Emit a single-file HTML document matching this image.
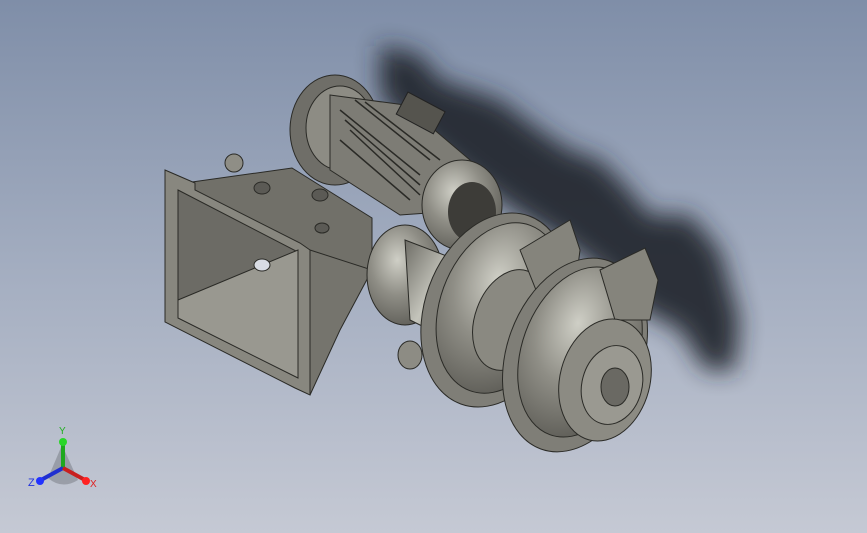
<!DOCTYPE html>
<html><head><meta charset="utf-8"><style>
html,body{margin:0;padding:0;width:867px;height:533px;overflow:hidden}
svg{display:block}
</style></head><body>
<svg width="867" height="533" viewBox="0 0 867 533" xmlns="http://www.w3.org/2000/svg">
<defs>
<linearGradient id="bg" x1="0" y1="0" x2="0" y2="1">
<stop offset="0" stop-color="#7f8ea8"/><stop offset="0.5" stop-color="#a3adc0"/><stop offset="1" stop-color="#c5c9d4"/>
</linearGradient>
<filter id="bl" x="-30%" y="-30%" width="160%" height="160%"><feGaussianBlur stdDeviation="12"/></filter>
<radialGradient id="met" cx="0.4" cy="0.35" r="0.7">
<stop offset="0" stop-color="#cfcfc6"/><stop offset="0.5" stop-color="#8f8e86"/><stop offset="1" stop-color="#5e5d57"/>
</radialGradient>
<linearGradient id="cyl" x1="0" y1="0" x2="1" y2="1">
<stop offset="0" stop-color="#6e6d66"/><stop offset="0.45" stop-color="#c4c4bb"/><stop offset="1" stop-color="#6a6963"/>
</linearGradient>
</defs>
<rect width="867" height="533" fill="url(#bg)"/>
<g filter="url(#bl)" fill="#22262e" opacity="0.92">
<path d="M380 45 L420 55 L440 80 L500 100 L540 130 L570 150 L600 160 L625 185 L650 215 L690 215 L720 250 L740 320 L735 370 L705 370 L680 330 L640 310 L600 270 L560 240 L520 215 L470 180 L420 140 L380 95 Z"/>
</g>
<ellipse cx="335" cy="130" rx="45" ry="55" fill="#6f6e68" stroke="#2a2a26"/>
<ellipse cx="340" cy="128" rx="34" ry="42" fill="#8d8c84" stroke="#2a2a26"/>
<path d="M330 95 L405 105 L470 160 L470 210 L400 215 L330 170 Z" fill="#7d7c75" stroke="#2a2a26"/>
<g stroke="#2a2a26" stroke-width="1.5">
<line x1="340" y1="110" x2="420" y2="175"/><line x1="345" y1="120" x2="420" y2="185"/>
<line x1="350" y1="130" x2="420" y2="195"/><line x1="355" y1="100" x2="430" y2="160"/>
<line x1="365" y1="102" x2="440" y2="160"/><line x1="340" y1="140" x2="410" y2="200"/>
</g>
<rect x="400" y="100" width="42" height="25" fill="#55544e" stroke="#222" transform="rotate(28 420 112)"/>
<ellipse cx="462" cy="205" rx="40" ry="45" fill="url(#met)" stroke="#2a2a26"/>
<ellipse cx="472" cy="212" rx="24" ry="30" fill="#3d3c38"/>
<path d="M192 182 L292 168 L372 218 L372 272 L312 300 L192 225 Z" fill="#717069" stroke="#2a2a26"/>
<path d="M165 170 L195 183 L195 190 L300 243 L310 250 L310 395 L295 388 L165 322 Z" fill="#88877f" stroke="#2a2a26"/>
<path d="M178 190 L298 252 L298 378 L178 318 Z" fill="#6c6b65" stroke="#2a2a26"/>
<path d="M178 300 L298 250 L298 378 L178 318 Z" fill="#999890" stroke="#2a2a26"/>
<path d="M310 250 L372 270 L340 330 L310 395 Z" fill="#75746d" stroke="#2a2a26"/>
<ellipse cx="262" cy="265" rx="8" ry="6" fill="#d9dce4" stroke="#2a2a26"/>
<ellipse cx="262" cy="188" rx="8" ry="6" fill="#5b5a55" stroke="#2a2a26"/>
<ellipse cx="320" cy="195" rx="8" ry="6" fill="#5b5a55" stroke="#2a2a26"/>
<ellipse cx="322" cy="228" rx="7" ry="5" fill="#5b5a55" stroke="#2a2a26"/>
<circle cx="234" cy="163" r="9" fill="#8f8e86" stroke="#2a2a26"/>
<ellipse cx="405" cy="275" rx="38" ry="50" fill="url(#met)" stroke="#2a2a26"/>
<path d="M405 240 L470 265 L470 350 L410 320 Z" fill="url(#cyl)" stroke="#2a2a26"/>
<ellipse cx="410" cy="355" rx="12" ry="14" fill="#8d8c84" stroke="#2a2a26"/>
<ellipse cx="495" cy="310" rx="70" ry="100" transform="rotate(20 495 310)" fill="#7f7e77" stroke="#2a2a26"/>
<ellipse cx="500" cy="308" rx="60" ry="88" transform="rotate(20 500 308)" fill="url(#met)" stroke="#2a2a26"/>
<ellipse cx="510" cy="320" rx="35" ry="52" transform="rotate(20 510 320)" fill="#8a8981" stroke="#2a2a26"/>
<path d="M520 250 L570 220 L580 250 L575 290 L540 300 Z" fill="#85847c" stroke="#2a2a26"/>
<ellipse cx="575" cy="355" rx="68" ry="100" transform="rotate(20 575 355)" fill="#7f7e77" stroke="#2a2a26"/>
<ellipse cx="580" cy="352" rx="58" ry="88" transform="rotate(20 580 352)" fill="url(#met)" stroke="#2a2a26"/>
<path d="M600 270 L645 248 L658 280 L650 320 L615 320 Z" fill="#85847c" stroke="#2a2a26"/>
<ellipse cx="605" cy="380" rx="45" ry="62" transform="rotate(15 605 380)" fill="#8c8b83" stroke="#2a2a26"/>
<ellipse cx="612" cy="385" rx="30" ry="40" transform="rotate(15 612 385)" fill="#9a9991" stroke="#2a2a26"/>
<ellipse cx="615" cy="387" rx="14" ry="19" fill="#6a6963" stroke="#2a2a26"/>
<path d="M62 445 L48 478 Q62 490 78 480 Z" fill="#6d7078" opacity="0.45"/>
<line x1="63" y1="468" x2="63" y2="444" stroke="#1fa81f" stroke-width="4"/>
<circle cx="63" cy="442" r="4" fill="#29d629"/>
<line x1="63" y1="468" x2="41" y2="480" stroke="#1f2fd0" stroke-width="4"/>
<circle cx="40" cy="481" r="4" fill="#2233ff"/>
<line x1="63" y1="468" x2="85" y2="480" stroke="#c81f1f" stroke-width="4"/>
<circle cx="86" cy="481" r="4" fill="#ff2222"/>
<text x="59" y="434" font-family="Liberation Sans, sans-serif" font-size="10" fill="#22b022">Y</text>
<text x="28" y="486" font-family="Liberation Sans, sans-serif" font-size="11" fill="#2233dd">Z</text>
<text x="90" y="487" font-family="Liberation Sans, sans-serif" font-size="10" fill="#e02020">X</text>
</svg>
</body></html>
